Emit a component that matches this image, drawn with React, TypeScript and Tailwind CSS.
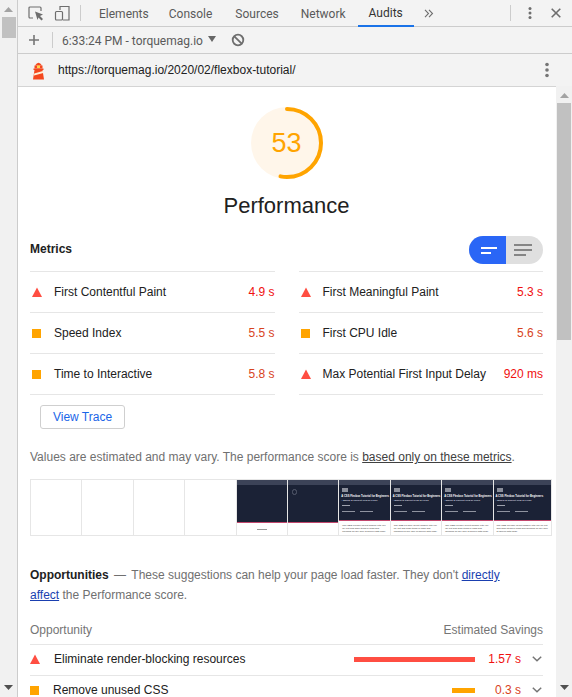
import React from 'react';

function Tri() {
  return (
    <svg width="10" height="10" viewBox="0 0 10 10">
      <path d="M5 0.5 L10 10 L0 10 Z" fill="#ff4e42" />
    </svg>
  );
}

function Square() {
  return <span className="block w-[9px] h-[9px] bg-[#ffa400]" />;
}

function Metric({ kind, label, value }: { kind: 'fail' | 'avg'; label: string; value: string }) {
  return (
    <div className="flex items-center h-[41px] border-b border-[#e6e6e6] pl-[2px]">
      <span className="w-[22px] flex items-center">{kind === 'fail' ? <Tri /> : <Square />}</span>
      <span className="text-[12px] text-[#212121]">{label}</span>
      <span className={`ml-auto text-[12px] ${kind === 'fail' ? 'text-[#f01010]' : 'text-[#d8431d]'}`}>{value}</span>
    </div>
  );
}

function Frame({ kind, last }: { kind: 'blank' | 'empty' | 'spin' | 'full'; last?: boolean }) {
  const size = last ? 'flex-1 min-w-0' : 'w-[51.4px] shrink-0 border-r border-[#e6e6e6]';
  if (kind === 'blank') return <div className={size} />;
  const full = kind === 'full';
  return (
    <div className={`${size} flex flex-col overflow-hidden`}>
      <div className="h-[5px] bg-[#3c4358] shrink-0" />
      <div className={`${full ? 'h-[35px]' : 'h-[37px]'} shrink-0 bg-[#1b2236] px-[2px] pt-[3px] flex flex-col overflow-hidden`}>
        {kind === 'spin' && <span className="w-[5px] h-[6px] mt-[1px] ml-[2px] rounded-full border border-[#565c6e]" />}
        {full && (
          <>
            <span className="w-[6px] h-[4px] ml-[1px] bg-[#8b8f9b] blur-[0.4px]" />
            <span className="text-[2.7px] leading-[4px] font-bold text-white whitespace-nowrap mt-[3px]">A CSS Flexbox Tutorial for Beginners</span>
            <span className="text-[2.4px] leading-[3px] font-bold text-[#d8dae0] whitespace-nowrap">- Which Is Correct Grid or Flex?</span>
            <span className="w-[8px] h-[1px] ml-[1px] bg-[#9da1ad] mt-[3px]" />
            <span className="flex gap-[5px] mt-[5px] ml-[1px]">
              <span className="w-[13px] h-[1px] bg-[#8f93a0]" />
              <span className="w-[13px] h-[1px] bg-[#8f93a0]" />
            </span>
          </>
        )}
      </div>
      <div className="h-[1px] shrink-0 bg-[#c2476d]" />
      <div className="flex-1 px-[3px] pt-[3px] bg-white overflow-hidden">
        {kind === 'empty' && <span className="block w-[10px] h-[1px] bg-[#999999] mx-auto mt-[3px]" />}
        {full && (
          <p className="text-[2.4px] leading-[3px] text-[#333333]">
            The CSS Flexbox layout module lets you lay out and align items in rows and columns on any size of screen with code.
          </p>
        )}
      </div>
    </div>
  );
}

function Chevron() {
  return (
    <svg width="10" height="6" viewBox="0 0 10 6" fill="none" stroke="#757575" strokeWidth="1.5">
      <path d="M0.8 0.8 L5 4.8 L9.2 0.8" />
    </svg>
  );
}

function Opportunity({ kind, label, barWidth, value, textClass }: { kind: 'fail' | 'avg'; label: string; barWidth: string; value: string; textClass: string }) {
  return (
    <div className="flex items-center h-[31px] pb-[2px] border-b border-[#e6e6e6] pr-[1px]">
      <span className={`${textClass} flex items-center`}>{kind === 'fail' ? <Tri /> : <Square />}</span>
      <span className="text-[12px] text-[#212121]">{label}</span>
      <span className="ml-auto w-[121px] flex justify-end">
        <span className={`h-[5px] ${barWidth} ${kind === 'fail' ? 'bg-[#ff4e42]' : 'bg-[#ffa400]'}`} />
      </span>
      <span className={`w-[46px] text-right text-[12px] ${kind === 'fail' ? 'text-[#f01010]' : 'text-[#d8431d]'}`}>{value}</span>
      <span className="w-[21px] flex justify-end"><Chevron /></span>
    </div>
  );
}

export default function App() {
  return (
    <div className="w-[572px] h-[697px] overflow-hidden flex bg-[#f3f3f3] font-['Liberation_Sans',sans-serif]">
      {/* left page scrollbar */}
      <div className="w-[18px] shrink-0 border-r border-[#cccccc] flex flex-col items-center bg-[#f1f1f1]">
        <svg width="9" height="5" viewBox="0 0 9 5" className="mt-[7px]"><path d="M4.5 0 L9 5 L0 5 Z" fill="#a3a3a3" /></svg>
        <div className="w-[14px] h-[21px] bg-[#c1c1c1] mt-[5px]" />
        <svg width="9" height="5" viewBox="0 0 9 5" className="mt-auto mb-[7px]"><path d="M0 0 L9 0 L4.5 5 Z" fill="#505050" /></svg>
      </div>

      <div className="flex-1 flex flex-col min-w-0">
        {/* devtools tabs */}
        <div className="h-[27px] shrink-0 border-b border-[#cccccc] flex items-center font-['Roboto',sans-serif] text-[12px] text-[#5a5a5a]">
          <svg width="16" height="16" viewBox="0 0 16 16" className="ml-[10px]" fill="none">
            <path d="M5 13 H2 a1 1 0 0 1 -1 -1 V3 a1 1 0 0 1 1 -1 H12 a1 1 0 0 1 1 1 V6" stroke="#6e6e6e" strokeWidth="1.2" />
            <path d="M7 6.5 L15 9.5 L12 11 L15 14 L13.5 15.5 L10.5 12.5 L9.5 15 Z" fill="#6e6e6e" />
          </svg>
          <svg width="16" height="16" viewBox="0 0 16 16" className="ml-[10px]" fill="none" stroke="#6e6e6e" strokeWidth="1.2">
            <path d="M6 5 V1.5 H15 V15 H9" />
            <rect x="1.5" y="6.5" width="7" height="8.5" rx="1" />
          </svg>
          <span className="w-px h-[16px] bg-[#cccccc] ml-[10px]" />
          <span className="ml-[18px] pt-[2px]">Elements</span>
          <span className="ml-[20px] pt-[2px]">Console</span>
          <span className="ml-[23px] pt-[2px]">Sources</span>
          <span className="ml-[22px] pt-[2px]">Network</span>
          <span className="ml-[12px] px-[11px] pt-[2px] h-[27px] flex items-center text-[#333333] border-b-2 border-[#1a73e8]">Audits</span>
          <svg width="10" height="9" viewBox="0 0 10 9" className="ml-[10px]" fill="none" stroke="#6e6e6e" strokeWidth="1.1">
            <path d="M1 0.8 L4.5 4.5 L1 8.2 M5 0.8 L8.5 4.5 L5 8.2" />
          </svg>
          <span className="w-px h-[16px] bg-[#cccccc] ml-auto" />
          <svg width="4" height="14" viewBox="0 0 4 14" className="ml-[17px]" fill="#6e6e6e">
            <circle cx="2" cy="2.5" r="1.5" /><circle cx="2" cy="7" r="1.5" /><circle cx="2" cy="11.5" r="1.5" />
          </svg>
          <svg width="10" height="10" viewBox="0 0 10 10" className="ml-[19px] mr-[11px]" fill="none" stroke="#6e6e6e" strokeWidth="1.6">
            <path d="M0.7 0.7 L9.3 9.3 M9.3 0.7 L0.7 9.3" />
          </svg>
        </div>

        {/* audits toolbar */}
        <div className="h-[27px] shrink-0 border-b border-[#cccccc] flex items-center font-['Roboto',sans-serif] text-[12px] text-[#5a5a5a]">
          <svg width="10" height="10" viewBox="0 0 10 10" className="ml-[11px]" fill="none" stroke="#757575" strokeWidth="1.6">
            <path d="M5 0 V10 M0 5 H10" />
          </svg>
          <span className="w-px h-[16px] bg-[#cccccc] ml-[13px]" />
          <span className="ml-[9px] pt-[1px]">6:33:24 PM - torquemag.io</span>
          <svg width="8" height="6" viewBox="0 0 8 6" className="ml-[5px] mb-[2px]"><path d="M0 0 H8 L4 6 Z" fill="#666666" /></svg>
          <svg width="14" height="14" viewBox="0 0 14 14" className="ml-[15px]" fill="none" stroke="#6e6e6e" strokeWidth="1.8">
            <circle cx="7" cy="7" r="5.3" /><path d="M3.3 3.3 L10.7 10.7" />
          </svg>
        </div>

        {/* url bar */}
        <div className="h-[32px] shrink-0 flex items-center">
          <svg width="15" height="19" viewBox="0 0 15 19" className="ml-[13px]">
            <path d="M4 4.5 Q7.5 -1 11 4.5 Z" fill="#f4481e" />
            <rect x="3.5" y="4.5" width="8" height="3" fill="#f4481e" />
            <rect x="6" y="4.5" width="3" height="2.5" fill="#ffd54a" />
            <rect x="2.5" y="7.5" width="10" height="1.5" fill="#f4481e" />
            <path d="M3.5 9 H11.5 L13 18.5 H2 Z" fill="#f4481e" />
            <path d="M3.2 12.5 L11.9 10 L12.2 12 L3 14.5 Z" fill="#fff0d8" />
          </svg>
          <span className="ml-[12px] text-[12px] text-[#212121]">https://torquemag.io/2020/02/flexbox-tutorial/</span>
          <svg width="4" height="16" viewBox="0 0 4 16" className="ml-auto mr-[23px]" fill="#757575">
            <circle cx="2" cy="2.5" r="1.8" /><circle cx="2" cy="8" r="1.8" /><circle cx="2" cy="13.5" r="1.8" />
          </svg>
        </div>

        <div className="flex-1 flex min-h-0">
          {/* report */}
          <div className="flex-1 min-w-0 bg-white overflow-hidden border-t border-[#d4d4d4] pl-[12px] pr-[13px]">
            <div className="flex flex-col items-center pt-[20px]">
              <div className="relative w-[72px] h-[72px] rounded-full bg-[#fff6ea] flex items-center justify-center">
                <svg width="72" height="72" viewBox="0 0 72 72" className="absolute inset-0 -rotate-90" fill="none">
                  <circle cx="36" cy="36" r="34" stroke="#ffa400" strokeWidth="4" strokeLinecap="round" strokeDasharray="113.2 213.6" />
                </svg>
                <span className="text-[27px] text-[#ffa400] leading-none">53</span>
              </div>
              <div className="text-[22px] leading-[28px] text-[#212121] mt-[13px]">Performance</div>
            </div>

            <div className="flex items-center justify-between mt-[16px] h-[28px]">
              <span className="text-[12px] font-bold text-[#212121] mb-[2px]">Metrics</span>
              <div className="flex w-[74px] h-[28px] rounded-full overflow-hidden bg-[#dfdfdf]">
                <div className="w-[37px] bg-[#2a66f6] flex flex-col justify-center gap-[3px] pl-[12px]">
                  <span className="block w-[16px] h-[2px] bg-white" />
                  <span className="block w-[10px] h-[2px] bg-white" />
                </div>
                <div className="flex-1 flex flex-col justify-center gap-[3px] pl-[8px]">
                  <span className="block w-[18px] h-[2px] bg-[#858585]" />
                  <span className="block w-[18px] h-[2px] bg-[#858585]" />
                  <span className="block w-[12px] h-[2px] bg-[#858585]" />
                </div>
              </div>
            </div>

            <div className="grid grid-cols-2 gap-x-6 mt-[7px]">
              <div className="border-t border-[#e6e6e6]">
                <Metric kind="fail" label="First Contentful Paint" value="4.9 s" />
                <Metric kind="avg" label="Speed Index" value="5.5 s" />
                <Metric kind="avg" label="Time to Interactive" value="5.8 s" />
              </div>
              <div className="border-t border-[#e6e6e6]">
                <Metric kind="fail" label="First Meaningful Paint" value="5.3 s" />
                <Metric kind="avg" label="First CPU Idle" value="5.6 s" />
                <Metric kind="fail" label="Max Potential First Input Delay" value="920 ms" />
              </div>
            </div>

            <button className="block ml-[10px] mt-[10px] w-[85px] h-[24px] rounded-[3px] border border-[#cfcfcf] text-[12px] text-[#1a66e8] bg-white">
              View Trace
            </button>

            <p className="mt-[20px] text-[12px] leading-[16px] text-[#707070] whitespace-nowrap">
              Values are estimated and may vary. The performance score is{' '}
              <span className="underline text-[#404040]">based only on these metrics</span>.
            </p>

            <div className="flex w-[522px] h-[57px] mt-[14px] border border-[#e6e6e6]">
              <Frame kind="blank" />
              <Frame kind="blank" />
              <Frame kind="blank" />
              <Frame kind="blank" />
              <Frame kind="empty" />
              <Frame kind="spin" />
              <Frame kind="full" />
              <Frame kind="full" />
              <Frame kind="full" />
              <Frame kind="full" last />
            </div>

            <p className="mt-[29px] text-[12px] leading-[20px] text-[#707070]">
              <span className="font-bold text-[#212121]">Opportunities</span>
              <span className="ml-[2px] mr-[2px]"> — </span>These suggestions can help your page load faster. They don't{' '}
              <span className="underline text-[#1a3fb0]">directly</span>
              <br />
              <span className="underline text-[#1a3fb0]">affect</span> the Performance score.
            </p>

            <div className="flex items-center justify-between h-[25px] mt-[15px] pb-[4px] border-b border-[#e6e6e6] text-[12px] text-[#757575]">
              <span>Opportunity</span>
              <span>Estimated Savings</span>
            </div>
            <Opportunity kind="fail" label="Eliminate render-blocking resources" barWidth="w-[121px]" value="1.57 s" textClass="w-[24px]" />
            <Opportunity kind="avg" label="Remove unused CSS" barWidth="w-[23px]" value="0.3 s" textClass="w-[23px]" />
          </div>

          {/* report scrollbar */}
          <div className="w-[16px] shrink-0 bg-[#f1f1f1] flex flex-col items-center">
            <svg width="9" height="5" viewBox="0 0 9 5" className="mt-[7px]"><path d="M4.5 0 L9 5 L0 5 Z" fill="#a3a3a3" /></svg>
            <div className="w-[14px] h-[237px] bg-[#c1c1c1] mt-[5px]" />
            <svg width="9" height="5" viewBox="0 0 9 5" className="mt-auto mb-[7px]"><path d="M0 0 L9 0 L4.5 5 Z" fill="#505050" /></svg>
          </div>
        </div>
      </div>
    </div>
  );
}
